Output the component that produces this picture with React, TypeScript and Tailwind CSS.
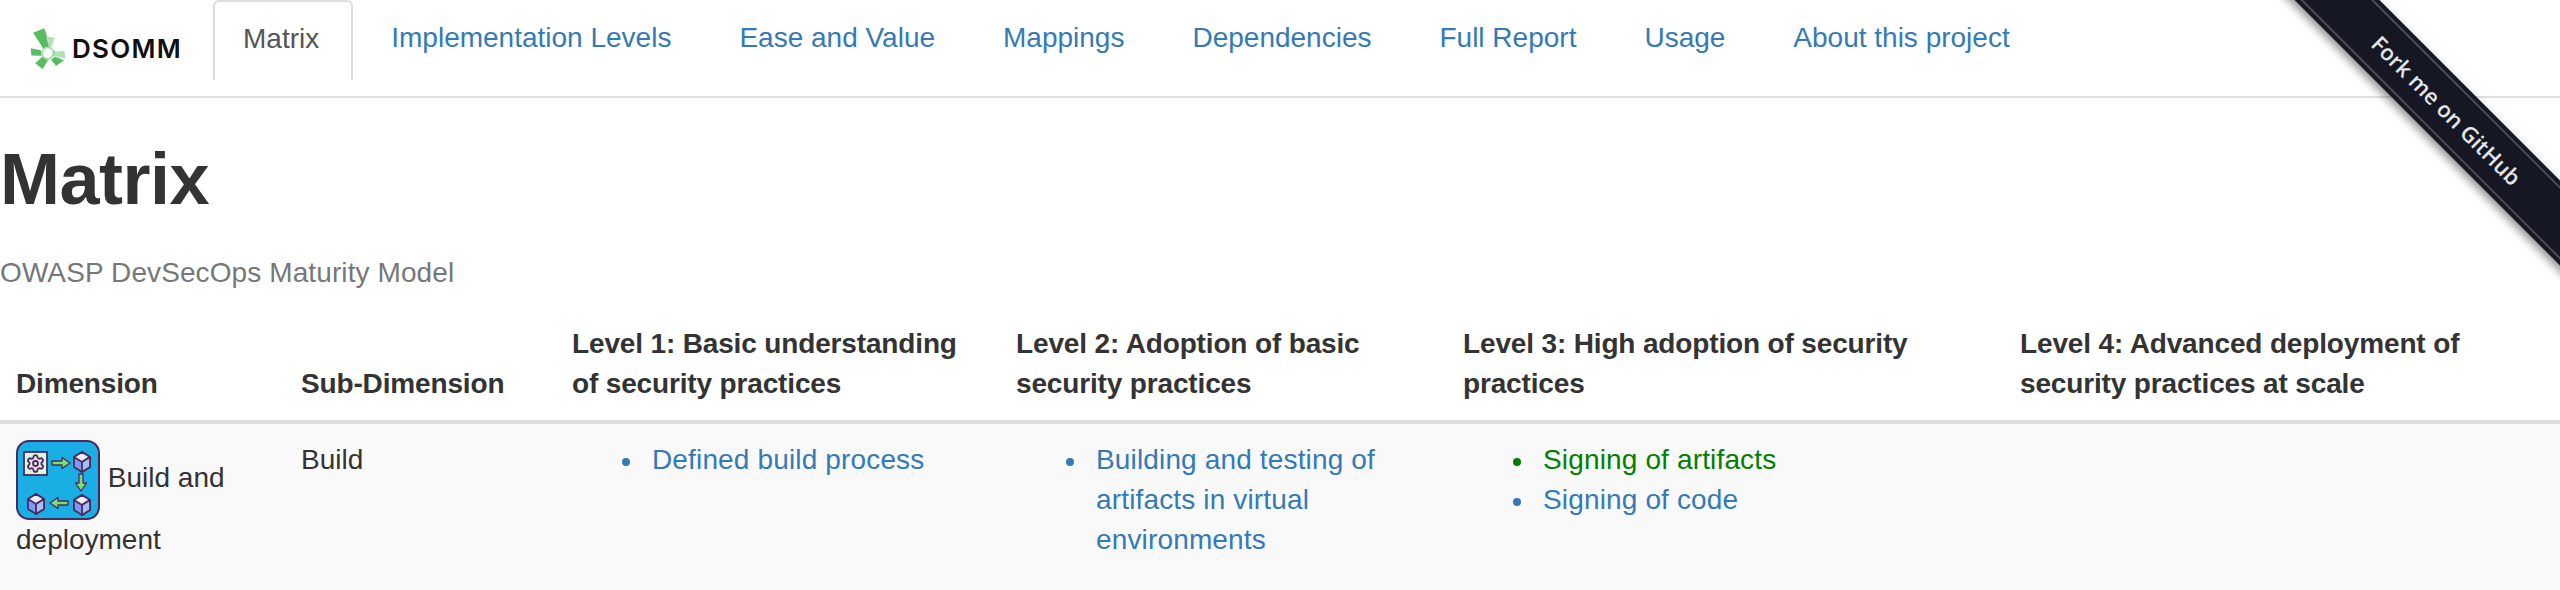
import { Settings } from "lucide-react";

const links = [
  "Implementation Levels",
  "Ease and Value",
  "Mappings",
  "Dependencies",
  "Full Report",
  "Usage",
  "About this project",
];

const bullet =
  "relative before:absolute before:left-[-30px] before:top-[18px] before:size-[8px] before:rounded-full before:bg-current before:content-['']";

function Logo() {
  return (
    <svg width="36" height="42" viewBox="88 76 106 124" className="shrink-0">
      <g fill="#58bd60">
        <polygon points="97,90 130,77 149,130 128,138" />
        <polygon points="90,136 120,142 122,158 92,157" />
        <polygon points="103,180 125,160 141,171 125,197" />
        <polygon points="150,170 162,160 188,171 165,188" />
        <polygon points="155,148 162,142 160,158 154,160" />
      </g>
      <g fill="#b3e1b5">
        <polygon points="135,100 161,105 151,134 143,130" />
        <polygon points="162,146 189,143 193,167 160,158" />
      </g>
      <circle cx="140" cy="150" r="17" fill="none" stroke="#a4dca7" strokeWidth="5" />
      <circle cx="140" cy="150" r="12" fill="#ffffff" />
    </svg>
  );
}

function Cube({ x, y }: { x: number; y: number }) {
  return (
    <g transform={`translate(${x} ${y})`} stroke="#4a2a5e" strokeWidth="1.8" strokeLinejoin="round">
      <polygon points="0,-10 8,-5 8,5 0,10 -8,5 -8,-5" fill="#7d9bef" />
      <polygon points="0,-10 8,-5 0,0 -8,-5" fill="#ecebfb" />
      <polygon points="0,0 8,-5 8,5 0,10" fill="#a9bdf5" />
    </g>
  );
}

function BuildIcon() {
  return (
    <svg width="84" height="80" viewBox="0 0 84 80" className="inline-block align-middle">
      <rect x="1" y="1" width="82" height="78" rx="12" fill="#19aee4" stroke="#4a2a5e" strokeWidth="2" />
      <rect x="8" y="12" width="23" height="23" fill="#dcf7d8" stroke="#4a2a5e" strokeWidth="1.8" />
      <Settings x={9.5} y={13.5} width={20} height={20} color="#4a2a5e" fill="#e9e4ea" strokeWidth={2.2} />
      <g fill="#7fdc6f" stroke="#4a2a5e" strokeWidth="1.3" strokeLinejoin="round">
        <polygon points="36,21 46,21 46,17.5 54,23 46,28.5 46,25 36,25" />
        <polygon points="63,34 67,34 67,43 70.5,43 65,51 59.5,43 63,43" />
        <polygon points="52,61 42,61 42,57.5 34,63 42,68.5 42,65 52,65" />
      </g>
      <Cube x={66} y={22} />
      <Cube x={66} y={65} />
      <Cube x={20} y={64} />
    </svg>
  );
}

function Ribbon() {
  return (
    <div className="pointer-events-none absolute right-0 top-0 h-[280px] w-[320px] overflow-hidden">
      <div className="absolute left-[-93px] top-[80px] h-[60px] w-[600px] rotate-45 bg-[#151823] p-[4px] shadow-[0_4px_10px_rgba(0,0,0,0.45)]">
        <div className="flex h-full items-center justify-center border-y-2 border-[#4b4d57] font-['Open_Sans',sans-serif] text-[22px] font-semibold text-[#e4e4e6]">
          Fork me on GitHub
        </div>
      </div>
    </div>
  );
}

export default function App() {
  return (
    <div className="relative h-[590px] overflow-hidden bg-white font-['Liberation_Sans',Arial,sans-serif] text-[28px] leading-[40px] text-[#333]">
      <nav className="flex h-[98px] items-start border-b-2 border-[#e0e0e0]">
        <div className="flex h-[80px] w-[213px] items-center pl-[30px] pt-[18px]">
          <Logo />
          <span className="ml-[6px] font-['Inter',sans-serif] text-[26px] font-semibold tracking-[1.3px] text-[#111]">
            DSOMM
          </span>
        </div>
        <a className="h-[80px] rounded-t-[6px] border-x-2 border-t-2 border-[#ddd] pl-[28px] pr-[32px] pt-[17px] text-[#555]">
          Matrix
        </a>
        {links.map((label) => (
          <a key={label} className="ml-[8px] px-[30px] pt-[18px] text-[#337ab7]">
            {label}
          </a>
        ))}
      </nav>

      <h1 className="mt-[42px] text-[72px] font-bold leading-[79px] tracking-[-0.5px]">Matrix</h1>
      <p className="mt-[34px] tracking-[0.1px] text-[#777]">OWASP DevSecOps Maturity Model</p>

      <table className="mt-[15px] w-full table-fixed border-collapse">
        <colgroup>
          <col className="w-[285px]" />
          <col className="w-[271px]" />
          <col className="w-[444px]" />
          <col className="w-[447px]" />
          <col className="w-[557px]" />
          <col />
        </colgroup>
        <thead>
          <tr className="border-b-4 border-[#ddd] text-left align-bottom tracking-[-0.15px]">
            <th className="p-[16px]">Dimension</th>
            <th className="p-[16px]">Sub-Dimension</th>
            <th className="p-[16px]">Level 1: Basic understanding of security practices</th>
            <th className="p-[16px]">Level 2: Adoption of basic security practices</th>
            <th className="p-[16px]">Level 3: High adoption of security practices</th>
            <th className="p-[16px]">Level 4: Advanced deployment of security practices at scale</th>
          </tr>
        </thead>
        <tbody>
          <tr className="bg-[#f9f9f9] align-top">
            <td className="p-[16px]">
              <BuildIcon /> Build and deployment
            </td>
            <td className="p-[16px]">Build</td>
            <td className="p-[16px]">
              <ul className="mb-[20px] pl-[80px] tracking-[0.15px] text-[#337ab7]">
                <li className={bullet}>Defined build process</li>
              </ul>
            </td>
            <td className="p-[16px]">
              <ul className="mb-[20px] pl-[80px] tracking-[0.15px] text-[#337ab7]">
                <li className={bullet}>Building and testing of artifacts in virtual environments</li>
              </ul>
            </td>
            <td className="p-[16px]">
              <ul className="mb-[20px] pl-[80px] tracking-[0.15px] text-[#337ab7]">
                <li className={`${bullet} text-[#008000]`}>Signing of artifacts</li>
                <li className={bullet}>Signing of code</li>
              </ul>
            </td>
            <td className="p-[16px]" />
          </tr>
        </tbody>
      </table>

      <Ribbon />
    </div>
  );
}
